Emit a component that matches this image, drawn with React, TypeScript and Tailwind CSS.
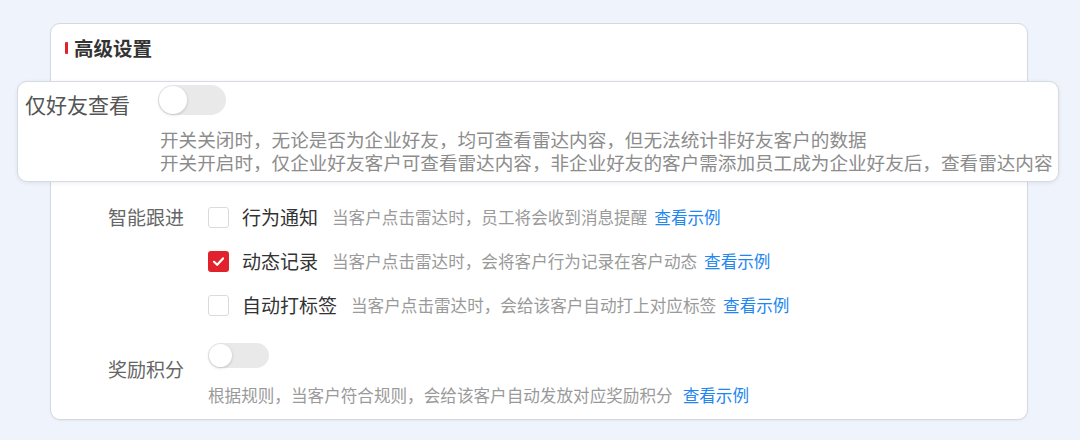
import React from "react"

const FONT = "font-['Noto_Sans_CJK_SC','Noto_Sans',sans-serif]"

interface FollowItem {
  label: string
  desc: string
  checked: boolean
}

const followItems: FollowItem[] = [
  { label: "行为通知", desc: "当客户点击雷达时，员工将会收到消息提醒", checked: false },
  { label: "动态记录", desc: "当客户点击雷达时，会将客户行为记录在客户动态", checked: true },
  { label: "自动打标签", desc: "当客户点击雷达时，会给该客户自动打上对应标签", checked: false },
]

const Toggle = ({ big = false }: { big?: boolean }) => (
  <div
    className={
      big
        ? "flex h-[30px] w-[68px] items-center rounded-full bg-[#e9e9e9] px-[1px]"
        : "flex h-[25px] w-[61px] items-center rounded-full bg-[#e9e9e9] px-[1px]"
    }
  >
    <div
      className={
        big
          ? "h-[28px] w-[28px] rounded-full bg-white shadow-[0_1px_3px_rgba(0,0,0,0.18)]"
          : "h-[23px] w-[23px] rounded-full bg-white shadow-[0_1px_3px_rgba(0,0,0,0.18)]"
      }
    />
  </div>
)

const Checkbox = ({ checked }: { checked: boolean }) =>
  checked ? (
    <div className="flex h-[21px] w-[21px] items-center justify-center rounded-[3px] bg-[#e1222c]">
      <svg width="13" height="13" viewBox="0 0 13 13" fill="none">
        <path d="M2 6.8 L5.2 9.8 L11 3.4" stroke="white" strokeWidth="2.2" strokeLinecap="round" strokeLinejoin="round" />
      </svg>
    </div>
  ) : (
    <div className="h-[21px] w-[21px] rounded-[3px] border border-[#d9dbe0] bg-white" />
  )

export default function App() {
  return (
    <div className={`relative h-[440px] w-[1080px] overflow-hidden bg-[#eef3fc] pt-[23px] pl-[50px] ${FONT}`}>
      {/* Card */}
      <div className="h-[397px] w-[978px] rounded-[10px] border border-[#d3d8e2] bg-white shadow-[0_1px_2px_rgba(0,0,0,0.05)]">
        {/* Title */}
        <div className="mt-[12px] flex items-center pl-[14px]">
          <span className="h-[12px] w-[3px] rounded-[1px] bg-[#e1222c]" />
          <span className="ml-[6px] text-[19.5px] leading-[24px] font-bold text-[#333]">高级设置</span>
        </div>

        {/* Smart follow-up */}
        <div className="mt-[135px] flex">
          <div className="w-[157px] pr-[24px] text-right text-[19px] leading-[44px] text-[#666]">智能跟进</div>
          <div className="flex flex-col">
            {followItems.map((item) => (
              <div key={item.label} className="flex h-[44px] items-center">
                <Checkbox checked={item.checked} />
                <span className="ml-[13px] text-[19px] text-[#333]">{item.label}</span>
                <span className="ml-[14px] text-[16.6px] text-[#9a9a9a]">{item.desc}</span>
                <span className="ml-[7px] text-[16.6px] text-[#2286f0]">查看示例</span>
              </div>
            ))}
          </div>
        </div>

        {/* Reward points */}
        <div className="mt-[16px] flex">
          <div className="w-[157px] pt-[14px] pr-[24px] text-right text-[19px] leading-[24px] text-[#666]">奖励积分</div>
          <div className="flex flex-col">
            <Toggle />
            <div className="mt-[15px] flex text-[16.6px] leading-[24px]">
              <span className="text-[#9a9a9a]">根据规则，当客户符合规则，会给该客户自动发放对应奖励积分</span>
              <span className="ml-[10px] text-[#2286f0]">查看示例</span>
            </div>
          </div>
        </div>
      </div>

      {/* Magnified callout over the first row */}
      <div className="absolute top-[81px] left-[17px] flex h-[101px] w-[1042px] rounded-[10px] border border-[#d6dae3] bg-white shadow-[0_1px_4px_rgba(0,0,0,0.08)]">
        <div className="w-[140px] pt-[8px] pl-[7px] text-[21px] leading-[28px] text-[#555]">仅好友查看</div>
        <div className="flex flex-col pt-[3px]">
          <Toggle big />
          <div className="mt-[12px] pl-[2px] text-[18.6px] leading-[24px] whitespace-nowrap text-[#8c8c8c]">
            <div>开关关闭时，无论是否为企业好友，均可查看雷达内容，但无法统计非好友客户的数据</div>
            <div className="-mt-[1px]">开关开启时，仅企业好友客户可查看雷达内容，非企业好友的客户需添加员工成为企业好友后，查看雷达内容</div>
          </div>
        </div>
      </div>
    </div>
  )
}
